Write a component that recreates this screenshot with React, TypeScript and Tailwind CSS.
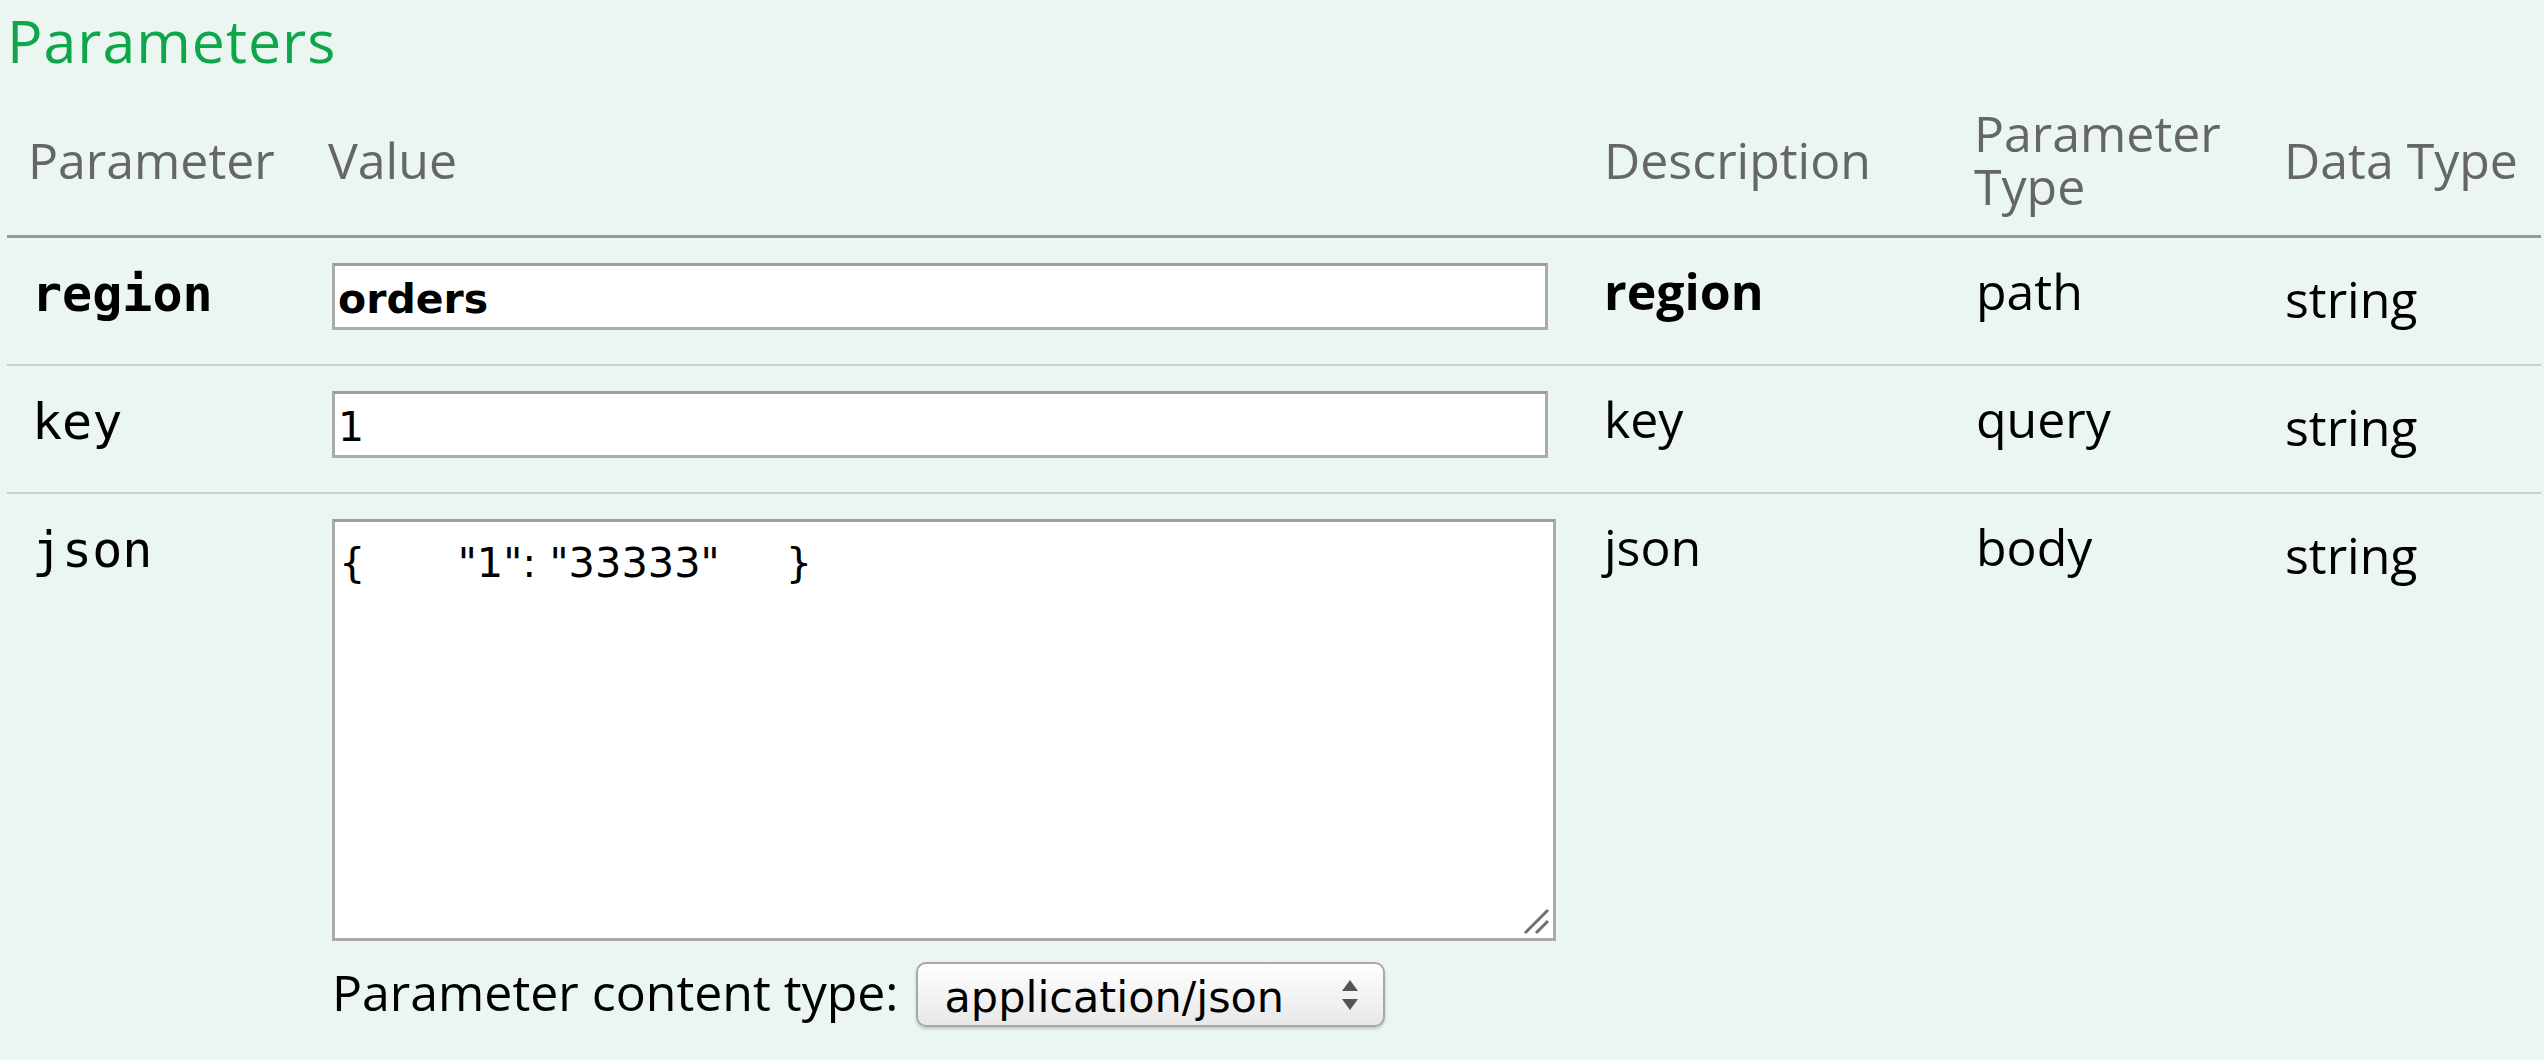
import React from "react";

type Param = {
  name: string;
  required?: boolean;
  value?: string;
  body?: boolean;
  desc: string;
  paramType: string;
  dataType: string;
};

const params: Param[] = [
  { name: "region", required: true, value: "orders", desc: "region", paramType: "path", dataType: "string" },
  { name: "key", value: "1", desc: "key", paramType: "query", dataType: "string" },
  { name: "json", body: true, desc: "json", paramType: "body", dataType: "string" },
];

const cols = "grid grid-cols-[303px_1274px_370px_310px_277px]";

function SelectBox() {
  return (
    <div className="mt-[21px] flex h-[65px] w-[469px] items-center justify-between rounded-[10px] border-2 border-[#a8a8a8] bg-gradient-to-b from-white to-[#e8e8e8] pl-[27px] pr-[24px] pt-[5px] shadow-[0_2px_3px_rgba(0,0,0,0.18)]">
      <span className="font-['DejaVu_Sans',sans-serif] text-[43px] leading-[normal] text-black">application/json</span>
      <svg width="18" height="32" viewBox="0 0 18 32" className="-mt-[5px]">
        <path d="M9 1 L17 12 L1 12 Z" fill="#555" />
        <path d="M9 31 L17 20 L1 20 Z" fill="#555" />
      </svg>
    </div>
  );
}

function BodyEditor() {
  return (
    <div>
      <div className="relative w-[1224px]">
        <textarea
          defaultValue={'{       "1": "33333"     }'}
          className="block h-[422px] w-full resize-none border-[3px] border-[#ababab] border-t-[#9d9d9d] bg-white pl-[4px] pt-[16px] font-['DejaVu_Sans',sans-serif] text-[41.5px] leading-[normal] text-black outline-none"
        />
        <svg width="28" height="28" viewBox="0 0 28 28" className="absolute bottom-[6px] right-[6px]">
          <path d="M3 26 L26 3" stroke="#6f6f6f" strokeWidth="3" />
          <path d="M14 26 L26 14" stroke="#6f6f6f" strokeWidth="3" />
        </svg>
      </div>
      <div className="flex items-start gap-[17px]">
        <span className="mt-[16px] font-['Open_Sans',sans-serif] text-[50px] leading-[70px] text-black">
          Parameter content type:
        </span>
        <SelectBox />
      </div>
    </div>
  );
}

function ParamRow({ p, last }: { p: Param; last: boolean }) {
  return (
    <div className={`${cols} items-start ${last ? "" : "border-b-2 border-[#cfcfcf]"}`}>
      <div
        className={`pl-[25px] pt-[21px] font-['DejaVu_Sans_Mono',monospace] text-[50px] leading-[70px] text-black ${
          p.required ? "font-bold" : ""
        }`}
      >
        {p.name}
      </div>
      <div className="pl-[22px] pt-[25px] pb-[34px]">
        {p.body ? (
          <BodyEditor />
        ) : (
          <input
            type="text"
            defaultValue={p.value}
            className={`block h-[67px] w-[1216px] border-[3px] border-[#ababab] border-t-[#9d9d9d] bg-white pl-[3px] pt-[4px] font-['DejaVu_Sans',sans-serif] text-[41px] text-black outline-none ${
              p.required ? "font-bold" : ""
            }`}
          />
        )}
      </div>
      <div
        className={`pl-[20px] pt-[18px] font-['Open_Sans',sans-serif] text-[50px] leading-[70px] text-black ${
          p.required ? "font-bold" : ""
        }`}
      >
        {p.desc}
      </div>
      <div className="pl-[22px] pt-[18px] font-['Open_Sans',sans-serif] text-[50px] leading-[70px] text-black">
        {p.paramType}
      </div>
      <div className="pl-[21px] pt-[26px] font-['Open_Sans',sans-serif] text-[50px] leading-[70px] text-black">
        {p.dataType}
      </div>
    </div>
  );
}

export default function App() {
  return (
    <div className="min-h-screen w-full overflow-hidden bg-[#ebf6f0]">
      <h4 className="h-[72px] pl-[7px] font-['Open_Sans',sans-serif] text-[59px] leading-[normal] tracking-[1px] text-[#0da64b]">
        Parameters
      </h4>
      <div className="ml-[7px] w-[2534px]">
        <div
          className={`${cols} items-center border-b-[3px] border-[#999999] pt-[35px] pb-[22px] font-['Open_Sans',sans-serif] text-[50px] leading-[53px] text-[#666666]`}
        >
          <div className="pl-[21px]">Parameter</div>
          <div className="pl-[18px]">Value</div>
          <div className="pl-[20px]">Description</div>
          <div className="pl-[20px]">Parameter Type</div>
          <div className="pl-[20px]">Data Type</div>
        </div>
        {params.map((p, i) => (
          <ParamRow key={p.name} p={p} last={i === params.length - 1} />
        ))}
      </div>
    </div>
  );
}
